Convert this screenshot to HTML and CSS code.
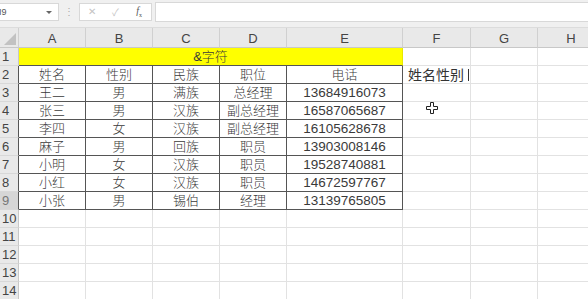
FILE: index.html
```html
<!DOCTYPE html>
<html lang="zh-CN">
<head>
<meta charset="UTF-8" />
<title>&amp;字符</title>
<link rel="stylesheet" href="styles.css">
</head>
<body>

<div class="toolbar">
  <div class="namebox">I9<span class="drop"></span></div>
  <div class="grip">⋮</div>
  <div class="fxbox">
    <span class="ic off">✕</span>
    <span class="ic off">✓</span>
    <span class="ic fx"><i>f</i><sub>x</sub></span>
  </div>
  <div class="formula"></div>
</div>

<div class="sheet">
  <div class="corner"><span class="tri"></span></div>
  <div class="ch">A</div><div class="ch">B</div><div class="ch">C</div><div class="ch">D</div>
  <div class="ch">E</div><div class="ch">F</div><div class="ch">G</div><div class="ch">H</div>

  <div class="rh">1</div>
  <div class="c title">&amp;字符</div>
  <div class="c"></div><div class="c"></div><div class="c"></div>

  <div class="rh edge">2</div>
  <div class="c b">姓名</div><div class="c b">性别</div><div class="c b">民族</div><div class="c b">职位</div><div class="c b">电话</div>
  <div class="c edit">姓名性别<span class="caret"></span></div><div class="c"></div><div class="c"></div>

  <div class="rh edge">3</div>
  <div class="c b">王二</div><div class="c b">男</div><div class="c b">满族</div><div class="c b">总经理</div><div class="c b num">13684916073</div>
  <div class="c"></div><div class="c"></div><div class="c"></div>

  <div class="rh edge">4</div>
  <div class="c b">张三</div><div class="c b">男</div><div class="c b">汉族</div><div class="c b">副总经理</div><div class="c b num">16587065687</div>
  <div class="c"><svg class="pointer" width="12" height="12" viewBox="0 0 12 12"><path d="M4.5 0.5h3v4h4v3h-4v4h-3v-4h-4v-3h4z" fill="#fff" stroke="#222" stroke-width="1"/></svg></div><div class="c"></div><div class="c"></div>

  <div class="rh edge">5</div>
  <div class="c b">李四</div><div class="c b">女</div><div class="c b">汉族</div><div class="c b">副总经理</div><div class="c b num">16105628678</div>
  <div class="c"></div><div class="c"></div><div class="c"></div>

  <div class="rh edge">6</div>
  <div class="c b">麻子</div><div class="c b">男</div><div class="c b">回族</div><div class="c b">职员</div><div class="c b num">13903008146</div>
  <div class="c"></div><div class="c"></div><div class="c"></div>

  <div class="rh edge">7</div>
  <div class="c b">小明</div><div class="c b">女</div><div class="c b">汉族</div><div class="c b">职员</div><div class="c b num">19528740881</div>
  <div class="c"></div><div class="c"></div><div class="c"></div>

  <div class="rh edge">8</div>
  <div class="c b">小红</div><div class="c b">女</div><div class="c b">汉族</div><div class="c b">职员</div><div class="c b num">14672597767</div>
  <div class="c"></div><div class="c"></div><div class="c"></div>

  <div class="rh edge sel">9</div>
  <div class="c b">小张</div><div class="c b">男</div><div class="c b">锡伯</div><div class="c b">经理</div><div class="c b num">13139765805</div>
  <div class="c"></div><div class="c"></div><div class="c"></div>

  <div class="rh">10</div>
  <div class="c"></div><div class="c"></div><div class="c"></div><div class="c"></div><div class="c"></div><div class="c"></div><div class="c"></div><div class="c"></div>
  <div class="rh">11</div>
  <div class="c"></div><div class="c"></div><div class="c"></div><div class="c"></div><div class="c"></div><div class="c"></div><div class="c"></div><div class="c"></div>
  <div class="rh">12</div>
  <div class="c"></div><div class="c"></div><div class="c"></div><div class="c"></div><div class="c"></div><div class="c"></div><div class="c"></div><div class="c"></div>
  <div class="rh">13</div>
  <div class="c"></div><div class="c"></div><div class="c"></div><div class="c"></div><div class="c"></div><div class="c"></div><div class="c"></div><div class="c"></div>
  <div class="rh">14</div>
  <div class="c"></div><div class="c"></div><div class="c"></div><div class="c"></div><div class="c"></div><div class="c"></div><div class="c"></div><div class="c"></div>
</div>

</body>
</html>
```

FILE: styles.css
```css
body {
  margin: 0;
  width: 588px;
  height: 299px;
  overflow: hidden;
  background: #fff;
  font-family: "Liberation Sans", "Noto Sans CJK SC", sans-serif;
  color: #3a3a3a;
}
.toolbar {
  display: flex;
  align-items: center;
  height: 28px;
  padding-bottom: 4px;
  box-sizing: border-box;
  background: #f0f0f0;
  border-bottom: 1px solid #dcdcdc;
}
.namebox {
  position: relative;
  width: 63px;
  height: 18px;
  margin-left: -4px;
  padding-left: 2px;
  box-sizing: border-box;
  background: #fff;
  border: 1px solid #d8d8d8;
  font-size: 9px;
  line-height: 16px;
  color: #555;
}
.drop {
  position: absolute;
  right: 6px;
  top: 7px;
  border-left: 3px solid transparent;
  border-right: 3px solid transparent;
  border-top: 3px solid #666;
}
.grip {
  width: 20px;
  text-align: center;
  font-size: 10px;
  color: #aaa;
}
.fxbox {
  display: flex;
  align-items: center;
  justify-content: space-around;
  width: 73px;
  height: 18px;
  box-sizing: border-box;
  background: #fff;
  border: 1px solid #d8d8d8;
}
.ic {
  font-size: 10px;
  width: 18px;
  text-align: center;
}
.ic.off {
  color: #c4c4c4;
}
.ic.fx {
  font-family: "Liberation Serif", serif;
  font-size: 10px;
  color: #555;
}
.ic.fx sub {
  font-size: 6px;
}
.formula {
  flex: 1;
  height: 18px;
  margin-left: 3px;
  background: #fff;
  border: 1px solid #d8d8d8;
  border-right: none;
}
.sheet {
  display: grid;
  grid-template-columns: 19px 67px 67px 67px 67px 116px 68px 67px 67px;
  grid-template-rows: 20px;
  grid-auto-rows: 18px;
}
.corner {
  position: relative;
  background: #e9e9e9;
  border-right: 1px solid #d0d0d0;
  border-bottom: 1px solid #c8c8c8;
}
.tri {
  position: absolute;
  right: 2px;
  bottom: 2px;
  border-left: 12px solid transparent;
  border-bottom: 12px solid #c2c2c2;
}
.ch {
  background: #e9e9e9;
  border-right: 1px solid #d0d0d0;
  border-bottom: 1px solid #c8c8c8;
  text-align: center;
  font-size: 13px;
  line-height: 21px;
  color: #444;
}
.rh {
  background: #e9e9e9;
  border-right: 1px solid #c8c8c8;
  border-bottom: 1px solid #d8d8d8;
  font-size: 13px;
  line-height: 18px;
  padding-left: 2px;
  color: #444;
}
.rh.edge {
  border-right-color: #555;
}
.rh.sel {
  background: #d6d6d6;
  color: #777;
}
.c {
  position: relative;
  border-right: 1px solid #e2e2e2;
  border-bottom: 1px solid #e2e2e2;
  text-align: center;
  font-size: 13px;
  font-weight: 300;
  line-height: 18px;
  white-space: nowrap;
}
.c.b {
  border-right-color: #555;
  border-bottom-color: #555;
}
.c.num {
  font-size: 13.5px;
  font-weight: 400;
}
.c.title {
  grid-column: span 5;
  background: #ffff00;
  border-right-color: #e8e800;
  border-bottom-color: #555;
}
.c.edit {
  text-align: left;
  padding-left: 5px;
  font-size: 14px;
  font-weight: 400;
  color: #333;
}
.caret {
  display: inline-block;
  width: 1px;
  height: 12px;
  margin-left: 4px;
  vertical-align: -1px;
  background: #333;
}
.pointer {
  position: absolute;
  left: 23px;
  top: 0;
}
```
